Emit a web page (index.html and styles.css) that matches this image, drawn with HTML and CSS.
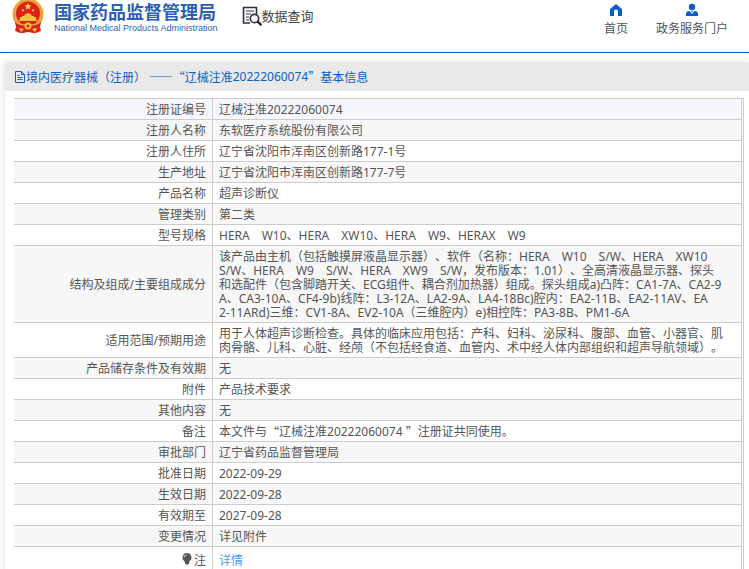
FILE: index.html
```html
<!DOCTYPE html>
<html lang="zh-CN">
<head>
<meta charset="utf-8">
<title>国家药品监督管理局 数据查询</title>
<link rel="stylesheet" href="styles.css">
</head>
<body>
<header class="header">
  <a class="brand" href="#">
    <svg class="emblem" viewBox="0 0 32 34" aria-hidden="true">
      <path d="M5 23l22 0 1 4-3 1 2 4-6 1-5-2-5 2-6-1 2-4-3-1z" fill="#d9231c"/>
      <circle cx="16" cy="14" r="15.500" fill="#e9a43c"/>
      <circle cx="16" cy="13.500" r="12" fill="#df2219"/>
      <path d="M16 3l1 2.300 2.500.2-1.900 1.600.6 2.500-2.200-1.300-2.200 1.300.6-2.500-1.900-1.600 2.500-.2z" fill="#ffd84a"/>
      <path d="M10 9l1 .5 1-.5-.3 1.200.8.800h-1l-.5 1-.5-1h-1l.8-.8zM20 9l1 .5 1-.5-.3 1.200.8.800h-1l-.5 1-.5-1h-1l.8-.8z" fill="#ffd84a"/>
      <path d="M8 19v-2h2v-1h3l-1-1 4-2 4 2-1 1h3v1h2v2l1 2H7z" fill="#f6c244"/>
      <path d="M3 22q13 5 26 0l-1 5 1 4-6 2-7-1-7 1-6-2 1-4z" fill="#d9231c"/>
      <path d="M4 22q12 5 24 0l-1 2q-11 4-22 0z" fill="#e9a43c"/>
      <circle cx="16" cy="26" r="3.500" fill="#f6c244"/>
      <circle cx="16" cy="26" r="1.500" fill="#d9231c"/>
      <path d="M7 28l5 1-3 3zM25 28l-5 1 3 3z" fill="#f6c244"/>
    </svg>
    <span class="brand-text">
      <span class="brand-cn">国家药品监督管理局</span>
      <span class="brand-en">National Medical Products Administration</span>
    </span>
  </a>
  <a class="query" href="#">
    <svg class="query-icon" viewBox="0 0 20 20" fill="none" stroke="#30303c" aria-hidden="true">
      <path d="M8 17H1.500V1.500h13V8" stroke-width="1.600"/>
      <path d="M4 5h8M4 8h5M4 11h3M4 14h3" stroke-width="1.200"/>
      <circle cx="12.500" cy="12.500" r="4.200" stroke-width="1.700"/>
      <path d="M15.500 15.500l4 3.700" stroke-width="2.400"/>
    </svg>
    <span>数据查询</span>
  </a>
  <nav class="nav">
    <a href="#">
      <svg class="nav-icon" viewBox="0 0 14 14" aria-hidden="true"><path d="M7 1l6 5v7H9V8.500a2 2 0 0 0-4 0V13H1V6z" fill="#0a5ec4"/></svg>
      <span>首页</span>
    </a>
    <a href="#">
      <svg class="nav-icon" viewBox="0 0 14 14" aria-hidden="true"><circle cx="7" cy="4" r="3.200" fill="#0a5ec4"/><path d="M1 13v-2q0-3 3.500-3L7 11l2.500-3Q13 8 13 11v2z" fill="#0a5ec4"/><path d="M6 8h2l-1 2z" fill="#0a5ec4"/></svg>
      <span>政务服务门户</span>
    </a>
  </nav>
</header>
<main class="panel">
  <h1 class="panel-title">
    <svg class="doc-icon" viewBox="0 0 12 12" fill="none" stroke="#0a5ec4" aria-hidden="true"><path d="M1.500.5H7.500l3 3v8h-9zM7.500.5v3h3M3.500 4.500h2M3.500 6.500h5M3.500 8.500h5"/></svg>
    <span class="cjk">境内医疗器械（注册） ——“辽械注准</span>20222060074<span class="cjk">”基本信息</span>
  </h1>
  <div class="frame">
    <table class="info">
      <tbody>
        <tr><th scope="row">注册证编号</th><td>辽械注准20222060074</td></tr>
        <tr><th scope="row">注册人名称</th><td>东软医疗系统股份有限公司</td></tr>
        <tr><th scope="row">注册人住所</th><td>辽宁省沈阳市浑南区创新路177-1号</td></tr>
        <tr><th scope="row">生产地址</th><td>辽宁省沈阳市浑南区创新路177-7号</td></tr>
        <tr><th scope="row">产品名称</th><td>超声诊断仪</td></tr>
        <tr><th scope="row">管理类别</th><td>第二类</td></tr>
        <tr><th scope="row">型号规格</th><td>HERA　W10、HERA　XW10、HERA　W9、HERAX　W9</td></tr>
        <tr><th scope="row">结构及组成/主要组成成分</th><td>该产品由主机（包括触摸屏液晶显示器）、软件（名称：HERA　W10　S/W、HERA　XW10<br>S/W、HERA　W9　S/W、HERA　XW9　S/W，发布版本：1.01）、全高清液晶显示器、探头<br>和选配件（包含脚踏开关、ECG组件、耦合剂加热器）组成。探头组成a)凸阵：CA1-7A、CA2-9<br>A、CA3-10A、CF4-9b)线阵：L3-12A、LA2-9A、LA4-18Bc)腔内：EA2-11B、EA2-11AV、EA<br>2-11ARd)三维：CV1-8A、EV2-10A（三维腔内）e)相控阵：PA3-8B、PM1-6A</td></tr>
        <tr><th scope="row">适用范围/预期用途</th><td>用于人体超声诊断检查。具体的临床应用包括：产科、妇科、泌尿科、腹部、血管、小器官、肌<br>肉骨骼、儿科、心脏、经颅（不包括经食道、血管内、术中经人体内部组织和超声导航领域）。</td></tr>
        <tr><th scope="row">产品储存条件及有效期</th><td>无</td></tr>
        <tr><th scope="row">附件</th><td>产品技术要求</td></tr>
        <tr><th scope="row">其他内容</th><td>无</td></tr>
        <tr><th scope="row">备注</th><td>本文件与<span class="cjk">“</span>辽械注准20222060074 <span class="cjk">”</span>注册证共同使用。</td></tr>
        <tr><th scope="row">审批部门</th><td>辽宁省药品监督管理局</td></tr>
        <tr><th scope="row">批准日期</th><td>2022-09-29</td></tr>
        <tr><th scope="row">生效日期</th><td>2022-09-28</td></tr>
        <tr><th scope="row">有效期至</th><td>2027-09-28</td></tr>
        <tr><th scope="row">变更情况</th><td>详见附件</td></tr>
        <tr class="note"><th scope="row"><svg class="bulb" viewBox="0 0 10 12" aria-hidden="true"><path d="M5 0a4.500 4.500 0 0 1 2.500 8.200L7 10.500 5 12 3 10.500l-.5-2.300A4.500 4.500 0 0 1 5 0z" fill="#555"/><path d="M2 4.500Q2.300 2.300 4.500 2" fill="none" stroke="#ddd"/></svg>注</th><td><a href="#">详情</a></td></tr>
      </tbody>
    </table>
  </div>
</main>
</body>
</html>
```
FILE: styles.css
```css
* {
  box-sizing: border-box;
}

body {
  margin: 0;
  background: #fff;
  color: #555;
  font: 12px/14px "Noto Sans", "Noto Sans CJK SC", sans-serif;
  text-spacing-trim: space-all;
}

a {
  color: inherit;
  text-decoration: none;
}

.cjk {
  font-family: "Noto Sans CJK SC", sans-serif;
  vertical-align: top;
}

.header {
  display: flex;
  align-items: flex-start;
  height: 53px;
  padding: 0 21px 0 12px;
  border-bottom: 1px solid #0a5ec4;
}

.brand {
  display: flex;
  gap: 10px;
  color: #2c5fb3;
}

.emblem {
  width: 32px;
  height: 34px;
}

.brand-text {
  display: flex;
  flex-direction: column;
  white-space: nowrap;
}

.brand-cn {
  font: bold 18px/22px "Noto Sans CJK SC", sans-serif;
}

.brand-en {
  font: 9px/12px "Liberation Sans", sans-serif;
}

.query {
  display: flex;
  align-items: center;
  margin: 6px 0 0 24px;
  color: #444;
  font: 13px/20px "Noto Sans CJK SC", sans-serif;
}

.query-icon {
  width: 20px;
  height: 20px;
}

.nav {
  display: flex;
  gap: 28px;
  margin: 3px 0 0 auto;
}

.nav a {
  display: flex;
  flex-direction: column;
  align-items: center;
  gap: 4px;
  line-height: 16px;
}

.nav-icon {
  width: 14px;
  height: 14px;
}

.panel {
  margin: 10px 0 0 5px;
  box-shadow: 0 0 8px rgba(0, 0, 0, 0.15);
}

.panel-title {
  display: flex;
  align-items: center;
  height: 28px;
  margin: 0;
  padding: 0 9px;
  background: #e9e9e9;
  color: #0a5ec4;
  font-size: 12px;
  font-weight: normal;
  white-space: pre;
}

.doc-icon {
  width: 12px;
  height: 12px;
}

.frame {
  margin: 7px 5px 0 9px;
  padding-right: 1px;
  border-top: 1px solid #ccc;
  border-right: 1px solid #ccc;
}

.info {
  width: 100%;
  border-collapse: separate;
  border-spacing: 0;
}

.info th,
.info td {
  padding: 4px 6px 2px;
  border-right: 1px solid #ccc;
  border-bottom: 1px solid #ccc;
  font-weight: normal;
  white-space: nowrap;
}

.info th {
  width: 199px;
  text-align: right;
}

.info td {
  text-align: left;
}

.info tr:nth-child(even) {
  background: #f7f7f7;
}

.info tr:first-child {
  background: #f5f7fd;
}

.info .note th,
.info .note td {
  padding-top: 6px;
  padding-bottom: 2px;
}

.note a {
  color: #409eff;
}

.bulb {
  width: 10px;
  height: 12px;
  margin-right: 2px;
}
```
